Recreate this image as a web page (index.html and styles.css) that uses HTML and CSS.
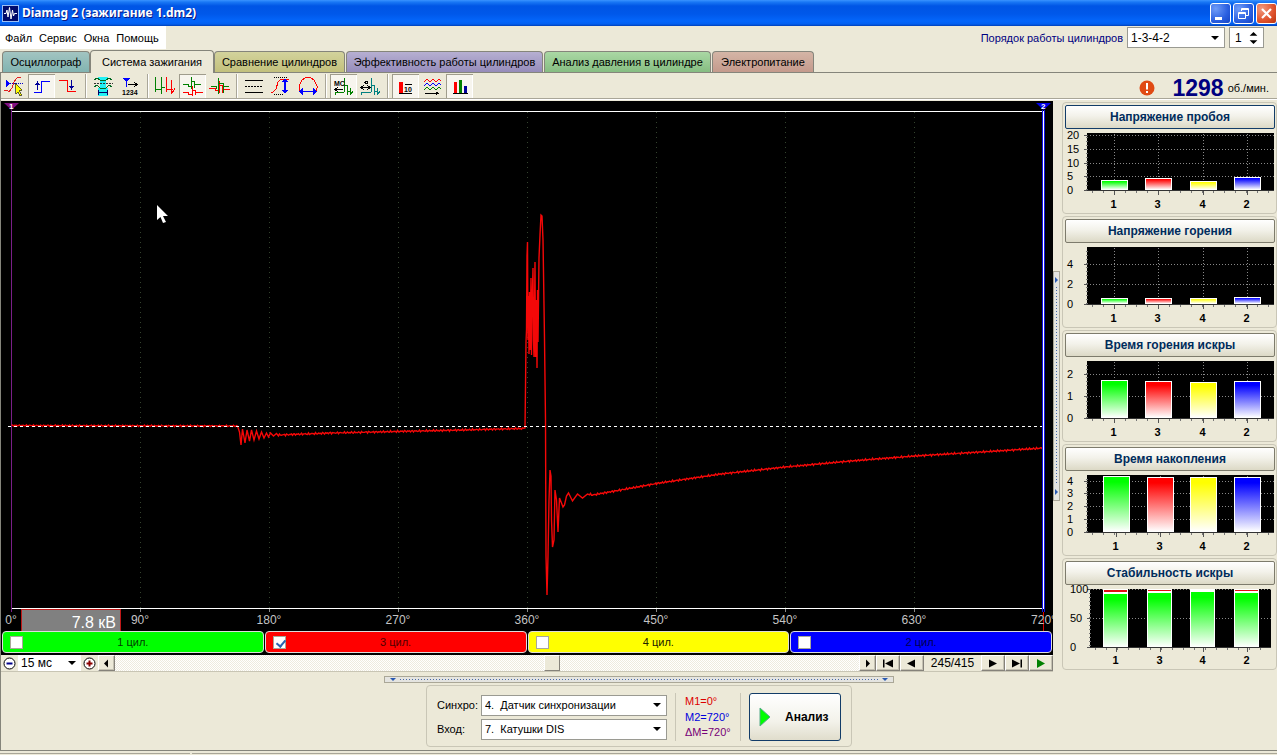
FILE: index.html
```html
<!DOCTYPE html>
<html lang="ru">
<head>
<meta charset="utf-8">
<title>Diamag 2 (зажигание 1.dm2)</title>
<link rel="stylesheet" href="styles.css">
</head>
<body>
<header class="titlebar">
  <svg class="app-icon" viewBox="0 0 17 17"><rect x="0.5" y="0.5" width="16" height="16" fill="#000a6b" stroke="#9cc0f5"/><path d="M2 8.500H4L5 5L6 12L7.500 2.500L9 14L10.500 5L11.500 11L12.500 8.500H15" fill="none" stroke="#fff"/></svg>
  <h1 class="title">Diamag 2 (зажигание 1.dm2)</h1>
  <button class="win-btn" aria-label="Свернуть"><svg viewBox="0 0 21 21"><rect x="5" y="14" width="7" height="3" fill="#fff"/></svg></button>
  <button class="win-btn" aria-label="Восстановить"><svg viewBox="0 0 21 21" fill="none" stroke="#fff"><path d="M8.500 8V5.500H15.500V12.500H13M8 6.500H16"/><path d="M5.500 9.500H12.500V15.500H5.500ZM5 10.500H13"/></svg></button>
  <button class="win-btn win-close" aria-label="Закрыть"><svg viewBox="0 0 21 21"><path d="M6 6L15 15M15 6L6 15" stroke="#fff" stroke-width="2.200"/></svg></button>
</header>

<div class="menu-row">
  <nav class="menu">
    <button>Файл</button><button>Сервис</button><button>Окна</button><button>Помощь</button>
  </nav>
  <div class="order">
    <label for="order">Порядок работы цилиндров</label>
    <select id="order" class="combo combo-order"><option>1-3-4-2</option></select>
    <span class="spinner"><input id="cyl" value="1" aria-label="Цилиндр"><svg viewBox="0 0 9 14"><path d="M0 4.500L4.500 0L9 4.500ZM0 9.500L4.500 14L9 9.500Z"/></svg></span>
  </div>
</div>

<nav class="tabs">
  <button class="tab tab-teal">Осциллограф</button>
  <button class="tab tab-active">Система зажигания</button>
  <button class="tab tab-olive">Сравнение цилиндров</button>
  <button class="tab tab-violet">Эффективность работы цилиндров</button>
  <button class="tab tab-green">Анализ давления в цилиндре</button>
  <button class="tab tab-brown">Электропитание</button>
</nav>

<div class="toolbar">
  <div class="tools">
    <button class="tool" aria-label="Уровень"><svg viewBox="0 0 27 24" fill="none"><path d="M3 16H6L8 18L11 14L13 8L16 4L20 3" stroke="#e02020"/><path d="M9 9.500H22" stroke="#00c" stroke-dasharray="1 1"/><path d="M5 6L9 9.500L5 13Z" fill="#00f"/><path d="M14 9L21 16L18 17L21 21L19 22L17 18L15 20Z" fill="#ff0" stroke="#222" stroke-width=".7"/></svg></button>
    <button class="tool pressed" aria-label="Фронт"><svg viewBox="0 0 27 24" fill="none"><path d="M6 18.500H13.500V7.500H22" stroke="#00f"/><path d="M9.500 16V9" stroke="#009" stroke-width="1.300"/><path d="M7 11L9.500 7L12 11Z" fill="#009"/></svg></button>
    <button class="tool" aria-label="Спад"><svg viewBox="0 0 27 24" fill="none"><path d="M4 6.500H12.500V17.500H21" stroke="#f00"/><path d="M16.500 6V14" stroke="#009" stroke-width="1.300"/><path d="M14 12L16.500 16L19 12Z" fill="#009"/></svg></button>
    <i class="sep"></i>
    <button class="tool" aria-label="Зона"><svg viewBox="0 0 27 24" fill="none"><path d="M8 3H18L16 7V12L18 15V22H8V15L10 12V7Z" fill="#20f0f4"/><path d="M4 6L7 4L10 6H16L19 4L22 6M4 13L7 11L10 14H16L19 11L22 13" stroke="#006820"/><path d="M4 9.500H23" stroke="#333" stroke-dasharray="2 1"/><path d="M9 18.500H17M8.500 16V21M17.500 16V21" stroke="#006"/></svg></button>
    <button class="tool" aria-label="Нумерация"><svg viewBox="0 0 27 24" fill="none"><path d="M5 4H13L9 8Z" fill="#00f"/><path d="M9 7V13" stroke="#00f"/><path d="M11 10.500H20M17 8L20 10.500L17 13" stroke="#000"/><text x="5" y="21" class="icon-text">1234</text></svg></button>
    <i class="sep"></i>
    <button class="tool" aria-label="Парад"><svg viewBox="0 0 27 24" fill="none"><path d="M3.500 3V17.500M3.500 16.500L5 15.500H9.500M9.500 3V20M9.500 13.500H12.500" stroke="#008000"/><path d="M14.500 3V17.500M14.500 16.500L16 15.500H20.500M19.500 6V20M19.500 18.500L21.500 17.500L23 14" stroke="#f00"/></svg></button>
    <button class="tool pressed" aria-label="Отдельно"><svg viewBox="0 0 27 24" fill="none"><path d="M4 10.500H9L10 12.500H12.500M12.500 3V15M12.500 7.500H15.500V14M15.500 11.500L17 10.500H22" stroke="#008000"/><path d="M4 18.500H9L10 20.500H13.500M13.500 12V22M13.500 16.500H16.500V21M16.500 18.500H24" stroke="#f00"/></svg></button>
    <button class="tool" aria-label="Наложение"><svg viewBox="0 0 27 24" fill="none"><path d="M3 14.500H9L10 16.500H13.500M13.500 7V19M13.500 11.500H16.500V19M16.500 15.500H24" stroke="#f00"/><path d="M5 12.500H10L11 14.500M12.500 4V20M12.500 9.500H17.500V19M17.500 12.500H23" stroke="#008000"/></svg></button>
    <i class="sep"></i>
    <button class="tool" aria-label="Линии"><svg viewBox="0 0 27 24" stroke="#000"><path d="M4 6.500H22M4 18.500H22"/><path d="M4 12.500H22" stroke-dasharray="2 1"/></svg></button>
    <button class="tool" aria-label="Амплитуда"><svg viewBox="0 0 27 24" fill="none"><path d="M3 18H5L8 15L10 8L13 5H18L21 6" stroke="#f00"/><path d="M6 3.500H19M6 20.500H15" stroke="#000" stroke-dasharray="1 1"/><path d="M17 7V17" stroke="#00f" stroke-width="1.500"/><path d="M14 8L17 4L20 8ZM14 16L17 20L20 16Z" fill="#00f"/></svg></button>
    <button class="tool" aria-label="Длительность"><svg viewBox="0 0 27 24" fill="none"><path d="M5 17L4 14V12L7 6L11 3.500H15L19 6L22 12V14L21 17" stroke="#f00"/><path d="M7 17.500H19" stroke="#00f" stroke-width="1.500"/><path d="M8 14L4 17.500L8 21ZM18 14L22 17.500L18 21Z" fill="#00f"/></svg></button>
    <i class="sep"></i>
    <button class="tool pressed" aria-label="Миллисекунды"><svg viewBox="0 0 27 24" fill="none"><path d="M5 21V18.500H14M14.500 4V18M14.500 11.500H17.500V21M17.500 17.500H21M20.500 14V20L23 17.500" stroke="#008000"/><path d="M6 15.500H13M8 13L5 15.500L8 18" stroke="#000"/><text x="4" y="12" class="icon-text">MC</text></svg></button>
    <button class="tool" aria-label="Градусы"><svg viewBox="0 0 27 24" fill="none"><path d="M4 21V18.500H14M14.500 4V18M14.500 11.500H17.500V21M17.500 17.500H21M20.500 14V20L23 17.500" stroke="#008080"/><path d="M5 13.500H12M7 11L4 13.500L7 16M10 11L13 13.500L10 16" stroke="#000"/><circle cx="9.500" cy="8.500" r="1.500" stroke="#000"/></svg></button>
    <i class="sep"></i>
    <button class="tool pressed" aria-label="Значения"><svg viewBox="0 0 27 24"><rect x="7" y="8" width="4" height="11" fill="#f00"/><path d="M7 19.500H20M13 10.500H20" stroke="#000"/><text x="12" y="18" class="icon-text">10</text></svg></button>
    <button class="tool" aria-label="Растр"><svg viewBox="0 0 27 24" fill="none"><path d="M5 8L8 5L11 8L14 5L17 8L20 5L22 7" stroke="#f00"/><path d="M5 12L8 9L11 12L14 9L17 12L20 9L22 11" stroke="#00f"/><path d="M5 16L8 13L11 16L14 13L17 16L20 13L22 15" stroke="#008000"/><path d="M6 19.500H19M17 18L19 19.500L17 21" stroke="#000"/></svg></button>
    <button class="tool pressed" aria-label="Гистограмма"><svg viewBox="0 0 27 24"><rect x="8" y="8" width="3" height="11" fill="#f00"/><rect x="13" y="6" width="3" height="13" fill="#008000"/><rect x="18" y="12" width="3" height="7" fill="#00009a"/><path d="M7 19.500H22" stroke="#000"/></svg></button>
  </div>
  <div class="rpm">
    <svg class="alert" viewBox="0 0 16 16"><circle cx="8" cy="8" r="7.500" fill="#e04a14"/><path d="M8 3V9.500M8 11V13" stroke="#fff" stroke-width="2"/></svg>
    <strong>1298</strong><span>об./мин.</span>
  </div>
</div>

<main class="work">
  <section class="scope">
    <svg class="plot" viewBox="0 0 1052 511" preserveAspectRatio="none">
      <g id="grid" stroke="#34432e" stroke-dasharray="1 4"></g>
      <path d="M10 10.500H1042M10 507.500H1042" stroke="#fff"/>
      <path d="M10.500 9V511" stroke="#7a1f88"/>
      <polyline id="wave" fill="none" stroke="#f40808" stroke-width="1.400"/>
      <path d="M7 325.500H1042" stroke="#fff" stroke-dasharray="3 3"/>
      <path d="M1041.500 9V511M1043.500 9V511" stroke="#1212e8"/>
      <path d="M1042.500 10V508" stroke="#fff"/>
      <path d="M3 2H18L10.500 9Z" fill="#80107f"/><path d="M1035 2H1050L1042.500 9Z" fill="#0000e8"/>
      <text class="marker" x="8" y="8">1</text><text class="marker" x="1040" y="8">2</text>
      <path d="M156 104V119L159.500 116L162 122L165 121L162 115H167Z" fill="#fff"/>
    </svg>
    <div class="axis">
      <span>0°</span><span>90°</span><span>180°</span><span>270°</span><span>360°</span><span>450°</span><span>540°</span><span>630°</span><span class="axis-end">720°</span>
      <output class="readout">7.8 кВ</output>
    </div>
    <div class="legend">
      <label class="cyl cyl-1"><input type="checkbox"><span>1 цил.</span></label>
      <label class="cyl cyl-3"><input type="checkbox" checked><span>3 цил.</span></label>
      <label class="cyl cyl-4"><input type="checkbox"><span>4 цил.</span></label>
      <label class="cyl cyl-2"><input type="checkbox"><span>2 цил.</span></label>
    </div>
    <div class="player">
      <button class="small" aria-label="Уменьшить"><svg viewBox="0 0 15 15"><circle cx="7.500" cy="7.500" r="5.500" fill="#fff" stroke="#000"/><path d="M4.500 7.500H10.500" stroke="#00008a" stroke-width="2"/></svg></button>
      <select class="combo combo-time" aria-label="Развёртка"><option>15 мс</option></select>
      <button class="small" aria-label="Увеличить"><svg viewBox="0 0 15 15"><circle cx="7.500" cy="7.500" r="5.500" fill="#fff" stroke="#000"/><path d="M4.500 7.500H10.500M7.500 4.500V10.500" stroke="#8a0000" stroke-width="2"/></svg></button>
      <button class="small raised" aria-label="Влево"><svg viewBox="0 0 15 15"><path d="M9 3.500V11.500L5 7.500Z"/></svg></button>
      <input class="track" type="range" min="0" max="1000" value="589" aria-label="Позиция">
      <button class="small raised" aria-label="Вправо"><svg viewBox="0 0 15 15"><path d="M6 3.500V11.500L10 7.500Z"/></svg></button>
      <button class="step raised" aria-label="В начало"><svg viewBox="0 0 22 15"><path d="M6 3.500H7.500V11.500H6ZM16 3.500V11.500L8 7.500Z"/></svg></button>
      <button class="step raised" aria-label="Назад"><svg viewBox="0 0 22 15"><path d="M14 3.500V11.500L6 7.500Z"/></svg></button>
      <output class="frame">245/415</output>
      <button class="step raised" aria-label="Вперёд"><svg viewBox="0 0 22 15"><path d="M7 3.500V11.500L15 7.500Z"/></svg></button>
      <button class="step raised" aria-label="В конец"><svg viewBox="0 0 22 15"><path d="M14.500 3.500H16V11.500H14.500ZM6 3.500V11.500L14 7.500Z"/></svg></button>
      <button class="step raised" aria-label="Пуск"><svg viewBox="0 0 22 15"><path d="M7 3V12L15 7.500Z" fill="#008000"/></svg></button>
    </div>
  </section>

  <div class="splitter-v"><div class="grip-v"><i class="tri-v"></i><i class="dots-v"></i><i class="tri-v"></i></div></div>

  <aside class="side">
    <section class="card"><button class="card-title focus">Напряжение пробоя</button><svg class="bars" viewBox="0 0 213 84"></svg></section>
    <section class="card"><button class="card-title">Напряжение горения</button><svg class="bars" viewBox="0 0 213 84"></svg></section>
    <section class="card"><button class="card-title">Время горения искры</button><svg class="bars" viewBox="0 0 213 84"></svg></section>
    <section class="card"><button class="card-title">Время накопления</button><svg class="bars" viewBox="0 0 213 84"></svg></section>
    <section class="card"><button class="card-title">Стабильность искры</button><svg class="bars" viewBox="0 0 213 84"></svg></section>
  </aside>
</main>

<footer class="bottom">
  <div class="grip-h"><i class="tri-h"></i><i class="dots-h"></i><i class="tri-h"></i></div>
  <div class="panel">
    <div class="inputs">
      <label for="sync">Синхро:</label>
      <select id="sync" class="combo"><option>4. &nbsp;Датчик синхронизации</option></select>
      <label for="input">Вход:</label>
      <select id="input" class="combo"><option>7. &nbsp;Катушки DIS</option></select>
    </div>
    <div class="marks"><span class="m1">M1=0°</span><span class="m2">M2=720°</span><span class="dm">ΔM=720°</span></div>
    <button class="analyze"><svg viewBox="0 0 12 20"><path d="M1 1V19L11 10Z" fill="#0f0" stroke="#5a8"/></svg>Анализ</button>
  </div>
</footer>
<div class="status"><span></span><span></span></div>
<script src="charts.js"></script>
</body>
</html>
```
FILE: styles.css
```css
* { box-sizing: border-box; }
body {
  margin: 0;
  min-height: 100vh;
  display: flex;
  flex-direction: column;
  background: #ece9d8;
  color: #000;
  font: 11px/14px "Liberation Sans", Arial, sans-serif;
}
button, select, input { font: inherit; color: inherit; margin: 0; padding: 0; border: 0; border-radius: 0; background: none; }
svg { display: block; }

.titlebar {
  height: 26px;
  display: flex;
  align-items: center;
  gap: 2px;
  padding-left: 2px;
  background: linear-gradient(#3a93ff 0, #1a78f5 2px, #0055e5 6px, #0058ea 14px, #0466fb 21px, #0360f0 24px, #0040b8 26px);
}
.app-icon { width: 17px; height: 17px; }
.title {
  flex: 1;
  margin: 0;
  padding-left: 1px;
  color: #fff;
  font: bold 12px/20px "Noto Sans", "Open Sans", sans-serif;
  text-shadow: 1px 1px 0 #0a1883;
}
.win-btn {
  width: 21px;
  height: 21px;
  border: 1px solid #fff;
  border-radius: 3px;
  background: radial-gradient(circle at 25% 25%, #6f9cf8, #2a5fe0 60%, #1644c4);
}
.win-close { background: radial-gradient(circle at 25% 25%, #f09a80, #e0522c 60%, #b83410); }
.win-btn svg { margin: -1px; width: 21px; height: 21px; }

.menu-row { height: 24px; display: flex; justify-content: space-between; align-items: flex-start; }
.menu { display: flex; gap: 7px; height: 23px; padding: 0 7px 0 5px; background: #fff; }
.order { display: flex; align-items: center; gap: 4px; padding: 1px 13px 0 0; color: #000080; }
.combo {
  appearance: none;
  height: 21px;
  padding: 0 20px 0 3px;
  border: 1px solid #9a9a92;
  color: #000;
  background: url("data:image/svg+xml,%3Csvg xmlns='http://www.w3.org/2000/svg' width='8' height='4'%3E%3Cpath d='M0 0H8L4 4Z'/%3E%3C/svg%3E") no-repeat right 5px center #fff;
}
.combo-order { width: 98px; font-size: 12px; }
.spinner { width: 35px; height: 21px; display: flex; align-items: center; justify-content: space-between; padding: 0 5px; border: 1px solid #9a9a92; background: #fff; color: #000; font-size: 12px; }
.spinner input { width: 14px; }
.spinner svg { width: 9px; height: 12px; }

.tabs { height: 23px; display: flex; align-items: flex-end; padding-left: 2px; gap: 1px; border-bottom: 1px solid #85857b; }
.tab {
  height: 21px;
  min-width: 88px;
  padding: 0 3px;
  border: 1px solid #85857b;
  border-bottom: 0;
  border-radius: 4px 4px 0 0;
}
.tab-teal { background: linear-gradient(#a2c4c1, #82b4b1); }
.tab-active { min-width: 124px; height: 23px; margin: 0 -1px -1px; background: #ece9d8; z-index: 1; }
.tab-olive { min-width: 131px; background: linear-gradient(#d3d39c, #c2c07c); }
.tab-violet { min-width: 197px; background: linear-gradient(#b6afd2, #968cba); }
.tab-green { min-width: 167px; background: linear-gradient(#aad8a4, #86bd82); }
.tab-brown { min-width: 102px; background: linear-gradient(#d4b5a6, #c49a8c); }

.toolbar { height: 28px; display: flex; justify-content: space-between; padding-top: 1px; border-left: 1px solid #85857b; background: linear-gradient(#fff, #fff) 0 26px / 100% 1px no-repeat, linear-gradient(#a9a698, #a9a698) 0 25px / 100% 1px no-repeat; }
.tools { display: flex; height: 24px; }
.tool { width: 27px; height: 24px; }
.tool svg { width: 27px; height: 24px; shape-rendering: crispEdges; }
.tool.pressed { background: #f7f5ee; box-shadow: inset 1px 1px #9f9c8c, inset -1px 0 #fff; }
.icon-text { font: bold 7px "Liberation Sans", sans-serif; fill: #000; }
.sep { width: 8px; height: 24px; background: linear-gradient(90deg, #0000 3px, #a9a698 3px 4px, #fff 4px 5px, #0000 5px); }
.rpm { display: flex; align-items: center; gap: 4px; height: 27px; padding-right: 8px; }
.rpm strong { color: #000080; font-size: 23px; line-height: 26px; }
.alert { width: 16px; height: 16px; margin-right: 13px; }

.work { flex: 1; display: flex; }
.scope { flex: 1; min-width: 0; display: flex; flex-direction: column; border-left: 1px solid #85857b; background: #000; }
.plot { width: 100%; flex: 1; height: 0; min-height: 300px; }
.marker { font: bold 8px "Liberation Sans", sans-serif; fill: #fff; }
.axis { position: relative; height: 19px; display: flex; justify-content: space-between; padding: 0 9px 0 10px; overflow-x: clip; color: #c4c4c4; font-size: 12px; line-height: 16px; }
.axis span { width: 0; display: flex; justify-content: center; white-space: nowrap; }
.axis .axis-end { background: linear-gradient(#d00, #d00) center / 1px 100% no-repeat; width: 1px; }
.readout {
  position: absolute;
  left: 20px;
  top: -3px;
  width: 100px;
  height: 22px;
  padding: 4px 4px 0 0;
  overflow: hidden;
  border: 1px solid #c01818;
  border-bottom: 0;
  background: #808080;
  color: #fff;
  font-size: 16px;
  line-height: 17px;
  text-align: right;
}
.legend { height: 24px; display: grid; grid-template-columns: repeat(4, 1fr); gap: 1px; padding: 0 1px 2px; }
.cyl { display: flex; align-items: center; padding-left: 7px; border: 1px solid #ddd; border-radius: 4px; }
.cyl span { flex: 1; text-align: center; padding-right: 20px; }
.cyl input { appearance: none; width: 13px; height: 13px; border: 1px solid #a8a89a; background: #fff; }
.cyl input:checked { position: relative; }
.cyl input:checked::after { content: ""; position: absolute; left: 4px; top: 1px; width: 4px; height: 7px; border: solid #2a62b0; border-width: 0 2px 2px 0; transform: rotate(40deg); }
.cyl-1 { background: #0f0; color: #004000; }
.cyl-3 { background: #f00; color: #500000; }
.cyl-4 { background: #ff0; color: #202000; }
.cyl-2 { background: #00f; color: #000050; }

.player { height: 17px; display: flex; background: #ece9d8; border-bottom: 1px solid #c8c5b4; }
.small { width: 17px; display: grid; place-items: center; }
.small svg { width: 15px; height: 15px; }
.raised { border: 1px solid; border-color: #fff #85827a #85827a #fff; box-shadow: inset -1px -1px #c4c1b2; }
.step { width: 24px; display: grid; place-items: center; }
.step svg { width: 22px; height: 15px; }
.combo-time { width: 63px; height: 16px; border: 0; font-size: 12px; line-height: 16px; }
.frame { width: 57px; text-align: center; font-size: 12px; line-height: 17px; }
.track { flex: 1; min-width: 0; appearance: none; background: #f6f4ec repeating-conic-gradient(#fff 0 25%, #eeebde 0 50%) 0 0 / 2px 2px; }
.track::-webkit-slider-thumb { appearance: none; width: 16px; height: 16px; background: #ece9d8; border: 1px solid; border-color: #fff #85827a #85827a #fff; }

.splitter-v { width: 9px; display: flex; padding: 170px 0 171px; }
.grip-v { width: 7px; display: flex; flex-direction: column; align-items: center; padding: 5px 0; gap: 4px; border: 1px solid #aaa797; background: #e4e4e0; }
.tri-v { border: solid #0000; border-width: 3px 0 3px 3px; border-left-color: #2858b0; }
.dots-v { flex: 1; width: 1px; background: repeating-linear-gradient(#4868a8 0 1px, #0000 1px 3px); }

.side { width: 215px; padding-top: 1px; display: flex; flex-direction: column; gap: 2px; }
.card { height: 112px; padding: 2px 1px 0 2px; border: 1px solid #c9c6b6; border-radius: 4px; }
.card-title {
  display: block;
  width: 100%;
  height: 24px;
  border: 1px solid #7d7b6c;
  border-radius: 2px;
  background: linear-gradient(#fff, #f3f2ea 45%, #dcd9c6);
  color: #002c5c;
  font-weight: bold;
  font-size: 12px;
}
.card-title.focus { border-color: #123c68; }
.bars { width: 213px; height: 84px; margin-left: -3px; font-size: 11px; }
.bars .cat { font-weight: bold; text-anchor: middle; }

.bottom { display: flex; flex-direction: column; align-items: center; gap: 2px; padding: 4px 0 3px; border-left: 1px solid #85857b; border-bottom: 1px solid #85857b; }
.grip-h { width: 40%; height: 7px; display: flex; align-items: center; gap: 4px; padding: 0 5px; border: 1px solid #aaa797; background: #e4e4e0; }
.tri-h { border: solid #0000; border-width: 3px 3px 0; border-top-color: #2858b0; }
.dots-h { flex: 1; height: 1px; background: repeating-linear-gradient(90deg, #4868a8 0 1px, #0000 1px 3px); }
.panel { display: flex; gap: 8px; padding: 7px 10px 5px; border: 1px solid #c9c6b6; border-radius: 4px; }
.inputs { display: grid; grid-template-columns: 40px 186px; gap: 3px 4px; align-items: center; align-content: center; white-space: nowrap; }
.marks { width: 66px; display: flex; flex-direction: column; justify-content: space-between; padding: 1px 9px; border: solid #c9c6b6; border-width: 0 1px; line-height: 15px; white-space: nowrap; }
.m1 { color: #d00; }
.m2 { color: #00d; }
.dm { color: #707; }
.analyze { width: 92px; height: 48px; display: flex; align-items: center; gap: 14px; padding-left: 9px; border: 1px solid #123c68; border-radius: 3px; background: linear-gradient(#fff, #f3f2ea 60%, #e0ddcc); font-weight: bold; font-size: 12px; }
.analyze svg { width: 12px; height: 20px; }
.status { height: 4px; display: grid; grid-template-columns: 190px 1fr; gap: 2px; padding-top: 2px; }
.status span { border-top: 1px solid #a9a698; }
```
FILE: charts.js
```js
const NS = "http://www.w3.org/2000/svg";
function add(parent, name, attrs, text) {
  const el = document.createElementNS(NS, name);
  for (const key in attrs) el.setAttribute(key, attrs[key]);
  if (text !== undefined) el.textContent = text;
  parent.appendChild(el);
  return el;
}

/* Oscilloscope grid, one line per 90 degrees */
const grid = document.getElementById("grid");
for (let x = 139.5; x < 1000; x += 129) {
  add(grid, "path", { d: `M${x} 11V507` });
  add(grid, "path", { d: `M${x} 508V511`, stroke: "#888", "stroke-dasharray": "none" });
}

/* Signal: smooth stretches get one-sample noise, the ringing is listed point by point */
const pts = [];
function stretch(keys, amp) {
  for (let i = 0; i < keys.length - 1; i++) {
    const [x0, y0] = keys[i], [x1, y1] = keys[i + 1];
    for (let x = x0; x < x1; x++) {
      const noise = amp * Math.sin(x * 12.9898) * Math.cos(x * 4.1);
      pts.push([x, y0 + (y1 - y0) * (x - x0) / (x1 - x0) + noise]);
    }
  }
}
stretch([[11, 425.500], [238, 426]], 0.8);
pts.push([239, 432], [240.500, 445], [242, 429], [244.500, 443], [246.500, 430], [249, 441], [251, 430], [253.500, 440], [256, 431], [258.500, 439], [261, 432], [263.500, 438], [266, 433], [268, 437], [270, 433], [273, 436], [276, 433.500]);
stretch([[278, 435], [330, 433], [440, 430.500], [524, 428.500]], 1.1);
pts.push([524.500, 428], [525, 387], [525.500, 342], [526, 330], [526.500, 256], [527, 242], [527.500, 340], [528, 296], [528.500, 354], [529, 292], [529.500, 350], [530.500, 278], [531, 355], [531.500, 310], [532.500, 268], [533, 340], [533.500, 357], [534.500, 262], [535, 357], [535.500, 308], [536, 300], [536.500, 368], [537, 290], [537.500, 342], [538.500, 258], [539.500, 235], [540.500, 215], [541.500, 216], [542.500, 240], [543, 272], [544, 339], [545, 420], [545.500, 556], [546.500, 595], [547.500, 556], [548.500, 500], [549.500, 470], [550.500, 476], [551, 520], [552, 547], [553.500, 540], [554.500, 490], [556, 500], [557.500, 532], [559, 498], [561, 503], [562.500, 507], [564, 505], [566, 496], [568, 493], [572, 501], [577, 494], [582, 498], [587, 494]);
stretch([[588, 494], [592, 495], [620, 490], [656, 483.500], [720, 474], [785, 467], [850, 461], [914, 456], [980, 452], [1043, 448]], 1.1);
document.getElementById("wave").setAttribute("points", pts.map(p => `${p[0] - 0.5},${(p[1] - 101).toFixed(1)}`).join(" "));

/* Bar charts: ticks are [label, y], tops give the upper edge of each bar */
const colors = ["#00ff00", "#ff0000", "#ffff00", "#0000ff"];
const charts = [
  { ticks: [[20, 6], [15, 20], [10, 34], [5, 47], [0, 61]], tops: [51, 49, 52, 48] },
  { ticks: [[4, 21], [2, 41], [0, 61]], tops: [55, 55, 55, 54] },
  { ticks: [[2, 17], [1, 39], [0, 61]], tops: [23, 24, 25, 24] },
  { ticks: [[4, 10], [3, 22], [2, 35], [1, 48], [0, 61]], tops: [5, 6, 6, 6], shift: 2 },
  { ticks: [[100, 4], [50, 33], [0, 62]], tops: [8, 7, 6, 7], left: 28, right: 209, labelX: 8, shift: 2, spark: [2, 1, 0, 1] }
];
document.querySelectorAll(".bars").forEach((svg, n) => {
  const c = charts[n], left = c.left || 25, right = c.right || 212;
  const bottom = c.ticks[c.ticks.length - 1][1];
  add(svg, "rect", { x: left, y: 4, width: right - left, height: bottom - 4, fill: "#000" });
  const centers = [52.5, 96.5, 141.5, 185.5].map((v, i) => v + (c.shift && i < 2 ? c.shift : 0));
  if (!c.spark) centers.forEach(x => add(svg, "path", { d: `M${x} 5V${bottom}`, stroke: "#888", "stroke-dasharray": "1 2" }));
  c.ticks.forEach(([label, y]) => {
    add(svg, "path", { d: `M${left} ${y + .5}H${right}`, stroke: "#888", "stroke-dasharray": "1 2" });
    add(svg, "path", { d: `M${left - 3} ${y + .5}h4`, stroke: "#555" });
    add(svg, "text", { x: c.labelX || 5, y: y + 4 }, label);
  });
  for (let y = 8; y < bottom; y += 4) add(svg, "path", { d: `M${left - 1} ${y + .5}h2`, stroke: "#777" });
  add(svg, "path", { d: `M${left} ${bottom + .5}H${right}`, stroke: "#333" });
  for (let x = left + 5; x < right; x += 11) add(svg, "path", { d: `M${x + .5} ${bottom + 1}v2`, stroke: "#777" });
  const defs = add(svg, "defs", {});
  centers.forEach((x, i) => {
    const color = c.spark ? colors[0] : colors[i], id = `fade${n}${i}`;
    const g = add(defs, "linearGradient", { id, x1: 0, y1: 0, x2: 0, y2: 1 });
    add(g, "stop", { offset: "0.1", "stop-color": color });
    add(g, "stop", { offset: "1", "stop-color": "#fff" });
    if (c.spark) {
      add(svg, "rect", { x: x - 13.5, y: 4, width: 25, height: bottom - 4, fill: "#fff" });
      if (c.spark[i]) add(svg, "rect", { x: x - 12.5, y: 5, width: 23, height: c.spark[i], fill: "#e01010" });
      add(svg, "rect", { x: x - 12.5, y: c.tops[i] + 1, width: 23, height: bottom - c.tops[i] - 1, fill: `url(#${id})` });
    } else {
      add(svg, "rect", { x: x - 13, y: c.tops[i] + .5, width: 26, height: bottom - c.tops[i] - 1, fill: `url(#${id})`, stroke: "#fff" });
    }
    add(svg, "path", { d: `M${x} ${bottom + 1}v4`, stroke: "#555" });
    add(svg, "text", { x: x - 1, y: 79, class: "cat" }, [1, 3, 4, 2][i]);
  });
});
```
